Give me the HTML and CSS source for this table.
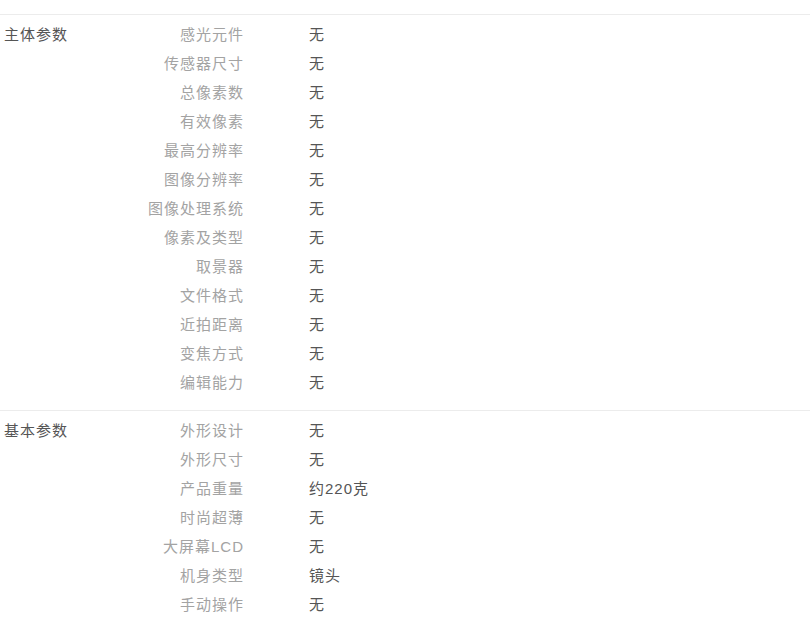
FILE: index.html
```html
<!DOCTYPE html>
<html lang="zh-CN">
<head>
<meta charset="UTF-8">
<meta name="viewport" content="width=device-width, initial-scale=1.0">
<title>参数</title>
<link rel="stylesheet" href="styles.css">
</head>
<body>
    <div class="spec-table">
        <div class="spec-section">
            <div class="group-name">主体参数</div>
            <ul class="param-list">
                <li class="param"><span class="param-name">感光元件</span><span class="param-value">无</span></li>
                <li class="param"><span class="param-name">传感器尺寸</span><span class="param-value">无</span></li>
                <li class="param"><span class="param-name">总像素数</span><span class="param-value">无</span></li>
                <li class="param"><span class="param-name">有效像素</span><span class="param-value">无</span></li>
                <li class="param"><span class="param-name">最高分辨率</span><span class="param-value">无</span></li>
                <li class="param"><span class="param-name">图像分辨率</span><span class="param-value">无</span></li>
                <li class="param"><span class="param-name">图像处理系统</span><span class="param-value">无</span></li>
                <li class="param"><span class="param-name">像素及类型</span><span class="param-value">无</span></li>
                <li class="param"><span class="param-name">取景器</span><span class="param-value">无</span></li>
                <li class="param"><span class="param-name">文件格式</span><span class="param-value">无</span></li>
                <li class="param"><span class="param-name">近拍距离</span><span class="param-value">无</span></li>
                <li class="param"><span class="param-name">变焦方式</span><span class="param-value">无</span></li>
                <li class="param"><span class="param-name">编辑能力</span><span class="param-value">无</span></li>
            </ul>
        </div>
        <div class="spec-section">
            <div class="group-name">基本参数</div>
            <ul class="param-list">
                <li class="param"><span class="param-name">外形设计</span><span class="param-value">无</span></li>
                <li class="param"><span class="param-name">外形尺寸</span><span class="param-value">无</span></li>
                <li class="param"><span class="param-name">产品重量</span><span class="param-value">约220克</span></li>
                <li class="param"><span class="param-name">时尚超薄</span><span class="param-value">无</span></li>
                <li class="param"><span class="param-name">大屏幕LCD</span><span class="param-value">无</span></li>
                <li class="param"><span class="param-name">机身类型</span><span class="param-value">镜头</span></li>
                <li class="param"><span class="param-name">手动操作</span><span class="param-value">无</span></li>
            </ul>
        </div>
    </div>
</body>
</html>
```
FILE: styles.css
```css
body {
    margin: 0;
    background-color: #fff;
    font-family: "Liberation Sans", "Noto Sans CJK SC", sans-serif;
    font-size: 15px;
    letter-spacing: 1px;
}

.spec-table {
    width: 810px;
    margin-top: 14px;
}

.spec-section {
    display: flex;
    border-top: 1px solid #ececec;
    padding: 5px 0 13px;
}

.group-name {
    width: 140px;
    padding-left: 4px;
    box-sizing: border-box;
    line-height: 29px;
    color: #555;
}

.param-list {
    list-style: none;
    margin: 0;
    padding: 0;
}

.param {
    display: flex;
    height: 29px;
    line-height: 29px;
}

.param-name {
    width: 104px;
    text-align: right;
    color: #a3a3a3;
}

.param-value {
    margin-left: 65px;
    color: #555;
}
```
